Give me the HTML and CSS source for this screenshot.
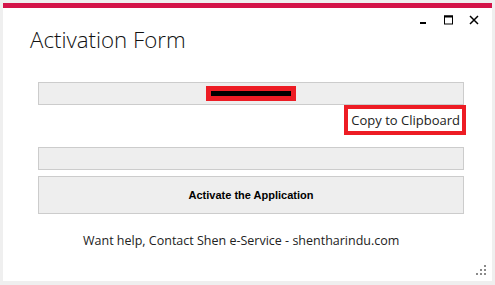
FILE: index.html
```html
<!DOCTYPE html>
<html>
<head>
<meta charset="utf-8">
<link rel="stylesheet" href="styles.css">
</head>
<body>
<div class="window">
  <div class="controls">
    <svg class="ctl" width="10" height="10" viewBox="0 0 10 10"><rect x="1" y="7" width="6" height="2" fill="#000"/></svg>
    <svg class="ctl" width="10" height="10" viewBox="0 0 10 10"><rect x="0.5" y="1" width="8" height="8" fill="none" stroke="#000" stroke-width="1"/><rect x="0" y="0.5" width="9" height="2" fill="#000"/></svg>
    <svg class="ctl" width="10" height="10" viewBox="0 0 10 10"><path d="M1 1 L9 9 M9 1 L1 9" stroke="#000" stroke-width="1.5"/></svg>
  </div>
  <h1 class="title">Activation Form</h1>
  <div class="form">
    <div class="field key">
      <div class="redact"><div class="bar"></div></div>
    </div>
    <div class="copy-row">
      <span class="copy">Copy to Clipboard</span>
    </div>
    <div class="field second"></div>
    <button class="activate">Activate the Application</button>
  </div>
  <p class="help">Want help, Contact Shen e-Service - shentharindu.com</p>
  <svg class="grip" width="12" height="12" viewBox="0 0 12 12">
    <rect x="8" y="0" width="2" height="2" fill="#8a8a8a"/>
    <rect x="4" y="4" width="2" height="2" fill="#8a8a8a"/>
    <rect x="8" y="4" width="2" height="2" fill="#8a8a8a"/>
    <rect x="0" y="8" width="2" height="2" fill="#8a8a8a"/>
    <rect x="4" y="8" width="2" height="2" fill="#8a8a8a"/>
    <rect x="8" y="8" width="2" height="2" fill="#8a8a8a"/>
  </svg>
</div>
</body>
</html>
```
FILE: styles.css
```css
html, body { margin: 0; padding: 0; }
body {
  background: #efefef;
  font-family: "Open Sans", "Segoe UI", sans-serif;
  width: 495px;
  height: 285px;
  overflow: hidden;
}
.window {
  margin: 3px;
  width: 489px;
  height: 278px;
  box-sizing: border-box;
  background: #fff;
  border-top: 5px solid #d31449;
  position: relative;
}
.controls {
  display: flex;
  justify-content: flex-end;
  gap: 15px;
  padding: 7px 13px 0 0;
  height: 10px;
}
.ctl { display: block; }
.title {
  margin: 0 0 0 27px;
  font-weight: 300;
  font-size: 22.3px;
  line-height: 30px;
  color: #111;
}
.form {
  margin: 27px 0 0 35px;
  width: 426px;
}
.field {
  height: 23px;
  box-sizing: border-box;
  background: #eeeeee;
  border: 1px solid #cccccc;
}
.key {
  display: flex;
  align-items: center;
  justify-content: center;
}
.redact {
  width: 90px;
  height: 15px;
  box-sizing: border-box;
  background: #ed1c24;
  display: flex;
  align-items: center;
  justify-content: center;
  margin-top: -1px;
}
.bar { width: 80px; height: 5px; background: #000; }
.copy-row {
  display: flex;
  justify-content: flex-end;
  margin-right: -2px;
}
.copy {
  border: 4px solid #ed1c24;
  height: 30px;
  box-sizing: border-box;
  padding: 0 2px 0 3px;
  font-size: 13px;
  line-height: 22px;
  color: #222;
}
.second { margin-top: 12px; }
.activate {
  display: block;
  margin-top: 6px;
  width: 426px;
  height: 38px;
  background: #eeeeee;
  border: 1px solid #cccccc;
  font-family: "Liberation Sans", Arial, sans-serif;
  font-weight: bold;
  font-size: 11px;
  color: #000;
  padding: 0;
}
.help {
  margin: 18px 0 0 80px;
  font-size: 12.5px;
  line-height: 18px;
  color: #222;
}
.grip {
  position: absolute;
  right: 4px;
  bottom: 4px;
}
```
